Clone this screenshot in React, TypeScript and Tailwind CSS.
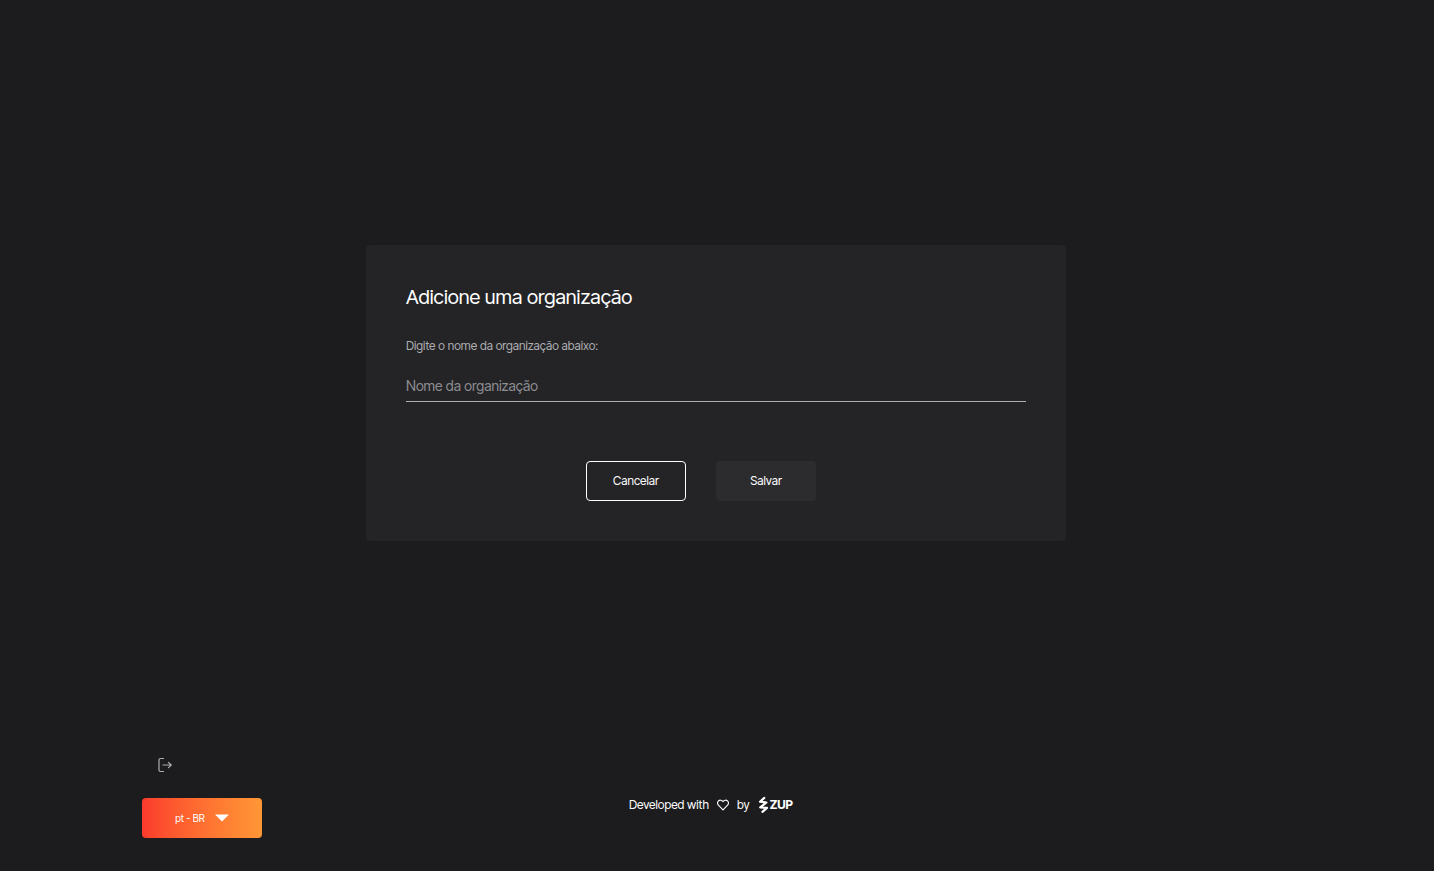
import { useState } from "react";

function LogoutIcon() {
  return (
    <svg width="16" height="16" viewBox="0 0 16 16" fill="none" stroke="currentColor" strokeWidth="1.2" strokeLinecap="round" strokeLinejoin="round" aria-hidden="true">
      <path d="M6.500 1.500H3.500A1.500 1.500 0 0 0 2 3v10A1.500 1.500 0 0 0 3.500 14.500h3" />
      <path d="M6 8h8.300M11.500 5.400 14.200 8l-2.700 2.600" />
    </svg>
  );
}

function HeartIcon() {
  return (
    <svg width="12" height="12" viewBox="0 0 12 12" fill="none" stroke="currentColor" strokeWidth="1.1" strokeLinejoin="round" aria-hidden="true">
      <path d="M6 10.900 1.400 6.200C.2 5 .3 3 1.500 1.900c1.200-1.100 3-.9 4 .2l.5.6.5-.6c1-1.100 2.800-1.300 4-.2 1.200 1.100 1.300 3.100.1 4.300Z" />
    </svg>
  );
}

function ZupMark() {
  return (
    <svg width="11" height="18" viewBox="0 0 11 18" fill="none" stroke="currentColor" strokeWidth="2.2" strokeLinecap="round" strokeLinejoin="round" aria-hidden="true">
      <path d="M6.300 1.900 2 5.700 8.400 6.500 2.200 11.400 9 11.900 4.400 15.900" />
    </svg>
  );
}

export default function App() {
  const [name, setName] = useState("");

  return (
    <div className="flex min-h-screen flex-col bg-[#1c1c1e] font-['Inter_Tight','Inter',sans-serif] text-white">
      <main className="flex flex-1 items-center justify-center pt-[29px] pr-[2px]">
        <form className="w-full max-w-[700px] rounded-sm bg-[#242426] p-10" onSubmit={(e) => e.preventDefault()}>
          <h1 className="text-[20px] leading-6">Adicione uma organização</h1>
          <label htmlFor="organization" className="mt-7 block text-[12px] leading-[18px] text-[#aeaeb2]">
            Digite o nome da organização abaixo:
          </label>
          <input
            id="organization"
            value={name}
            onChange={(e) => setName(e.target.value)}
            placeholder="Nome da organização"
            className="mt-[15px] block h-8 w-full border-b border-[#aeaeb2] bg-transparent text-[14px] text-white outline-none placeholder:text-[#8e8e93]"
          />
          <div className="mt-[59px] flex gap-[30px] pl-[180px]">
            <button type="button" className="h-10 w-[100px] rounded border border-white text-[12px]">Cancelar</button>
            <button type="submit" className="h-10 w-[100px] rounded bg-[#2c2c2e] text-[12px]">Salvar</button>
          </div>
        </form>
      </main>
      <footer className="grid grid-cols-3 pb-[33px]">
        <div className="flex flex-col items-start pl-[142px]">
          <button type="button" aria-label="Sair" className="ml-[15px] text-[#aeaeb2]">
            <LogoutIcon />
          </button>
          <button type="button" className="mt-[25px] flex h-10 w-[120px] items-center justify-center gap-[10px] rounded bg-linear-to-r from-[#fa3a2c] to-[#ff9736] text-[10px]">
            <span>pt - BR</span>
            <svg width="14" height="8" viewBox="0 0 14 8" fill="currentColor" aria-hidden="true">
              <path d="M0 .5h14L7 7.500Z" />
            </svg>
          </button>
        </div>
        <div className="flex items-start justify-center pt-[39px] pr-3">
          <div className="flex h-[18px] items-center gap-2 text-[12px]">
            <span>Developed with</span>
            <HeartIcon />
            <span>by</span>
            <span className="flex items-center gap-px">
              <ZupMark />
              <span className="text-[12px] font-bold">ZUP</span>
            </span>
          </div>
        </div>
      </footer>
    </div>
  );
}
